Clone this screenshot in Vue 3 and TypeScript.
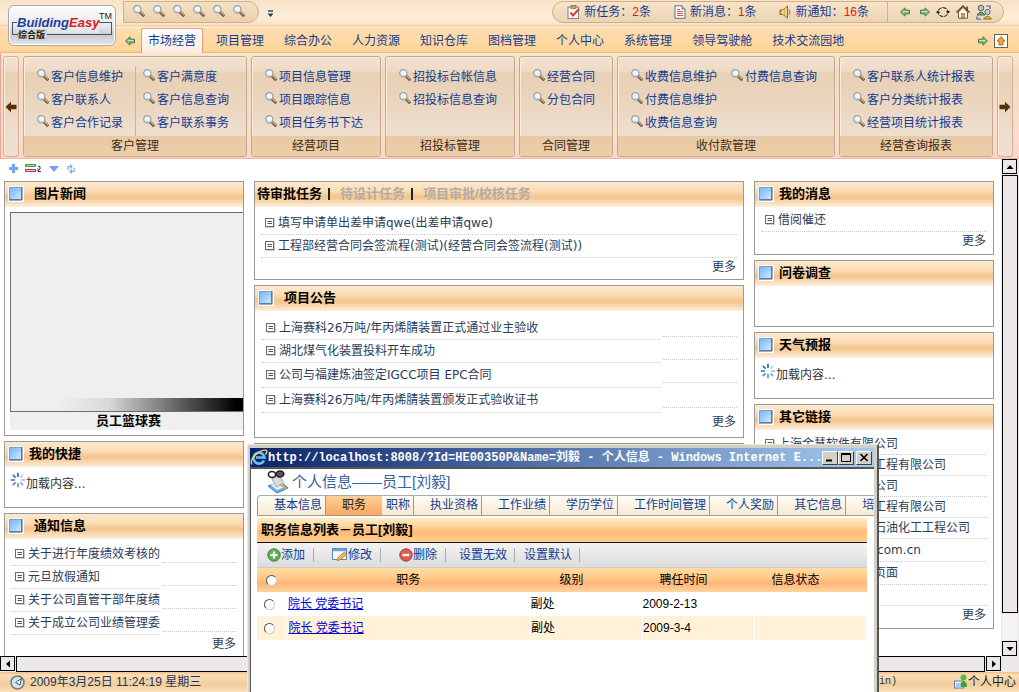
<script setup lang="ts">
import { ref } from 'vue'

interface RibbonGroup { title: string; columns: string[][]; divided?: boolean }
interface Notice { text: string; tall?: boolean }
interface Staff { post: string; level: string; date: string; state: string }

const tabs = ['市场经营', '项目管理', '综合办公', '人力资源', '知识仓库', '图档管理', '个人中心', '系统管理', '领导驾驶舱', '技术交流园地']
const activeTab = ref('市场经营')

const groups: RibbonGroup[] = [
  { title: '客户管理', divided: true, columns: [['客户信息维护', '客户联系人', '客户合作记录'], ['客户满意度', '客户信息查询', '客户联系事务']] },
  { title: '经营项目', columns: [['项目信息管理', '项目跟踪信息', '项目任务书下达']] },
  { title: '招投标管理', columns: [['招投标台帐信息', '招投标信息查询']] },
  { title: '合同管理', columns: [['经营合同', '分包合同']] },
  { title: '收付款管理', columns: [['收费信息维护', '付费信息维护', '收费信息查询'], ['付费信息查询']] },
  { title: '经营查询报表', columns: [['客户联系人统计报表', '客户分类统计报表', '经营项目统计报表']] },
]

const counters = [
  { icon: 'i-task', label: '新任务：', count: 2 },
  { icon: 'i-note', label: '新消息：', count: 1 },
  { icon: 'i-horn', label: '新通知：', count: 16 },
]

const approvals = ['填写申请单出差申请qwe(出差申请qwe)', '工程部经营合同会签流程(测试)(经营合同会签流程(测试))']
const bulletins: Notice[] = [
  { text: '上海赛科26万吨/年丙烯腈装置正式通过业主验收' },
  { text: '湖北煤气化装置投料开车成功' },
  { text: '公司与福建炼油签定IGCC项目 EPC合同', tall: true },
  { text: '上海赛科26万吨/年丙烯腈装置颁发正式验收证书', tall: true },
]
const notices: Notice[] = [
  { text: '关于进行年度绩效考核的' },
  { text: '元旦放假通知' },
  { text: '关于公司直管干部年度绩' },
  { text: '关于成立公司业绩管理委' },
]
const links: Notice[] = [
  { text: '上海金慧软件有限公司' },
  { text: '中国石化集团上海工程有限公司' },
  { text: '中国石油化工集团公司' },
  { text: '中国石化集团宁波工程有限公司' },
  { text: '中国石化集团洛阳石油化工工程公司' },
  { text: 'www.goldensoft.com.cn', tall: true },
  { text: '企业信息门户系统页面', tall: true },
]

const infoTabs = ['基本信息', '职务', '职称', '执业资格', '工作业绩', '学历学位', '工作时间管理', '个人奖励', '其它信息', '培训信息']
const activeInfo = ref('职务')
const picked = ref('')
const staff: Staff[] = [
  { post: '院长 党委书记', level: '副处', date: '2009-2-13', state: '' },
  { post: '院长 党委书记', level: '副处', date: '2009-3-4', state: '' },
]
</script>

<template>
  <div class="page">
    <svg class="defs" width="0" height="0" aria-hidden="true">
      <defs>
        <linearGradient id="g-blue" x1="0" y1="0" x2="1" y2="1">
          <stop offset="0" stop-color="#6fb4f8" /><stop offset="1" stop-color="#d3ebff" />
        </linearGradient>
        <symbol id="i-search" viewBox="0 0 12 12">
          <path d="M7 7 L10.3 10.3" stroke="#5f574f" stroke-width="3" stroke-linecap="round" />
          <path d="M7.8 7 L10.6 9.8" stroke="#dfa85c" stroke-width="1.4" stroke-linecap="round" />
          <circle cx="4.3" cy="4.3" r="3.6" fill="#f2f8fc" stroke="#979ea9" stroke-width="1.2" />
          <path d="M2.2 4.6 A2.2 2.2 0 0 0 5.6 6.2" stroke="#bcd6ea" fill="none" />
        </symbol>
        <symbol id="i-arrow" viewBox="0 0 10 10">
          <path d="M0.5 5 L5 0.8 V3.2 H9.5 V6.8 H5 V9.2 Z" fill="#7cc47a" stroke="#4d7547" />
          <path d="M3 4.5 H8.5" stroke="#c4edbb" />
        </symbol>
        <symbol id="i-brown" viewBox="0 0 12 12">
          <path d="M0.5 6 L6 0.8 V3.7 H11.5 V8.3 H6 V11.2 Z" fill="#5b2f05" />
        </symbol>
        <symbol id="i-task" viewBox="0 0 14 14">
          <rect x="1" y="2" width="10.5" height="11.5" fill="#f4f6fa" stroke="#7682a0" />
          <rect x="4" y="0.5" width="5" height="3" fill="#c9a15e" stroke="#7d6642" stroke-width=".7" />
          <path d="M3.5 7.5 L6 10.5 L12 4" fill="none" stroke="#d8402c" stroke-width="2" />
        </symbol>
        <symbol id="i-note" viewBox="0 0 14 14">
          <path d="M2 .8 H9 L12 4 V13.3 H2 Z" fill="#fff" stroke="#5e6c8a" />
          <path d="M9 .8 V4 H12" fill="#cdd8ec" stroke="#5e6c8a" />
          <path d="M4 4.5 H7 M4 8.5 H10" stroke="#d95a44" /><path d="M4 6.5 H10 M4 10.5 H10" stroke="#d95a44" />
        </symbol>
        <symbol id="i-horn" viewBox="0 0 14 14">
          <path d="M1 5 H4 L8.5 1 V13 L4 9.5 H1 Z" fill="#e7b64e" stroke="#8a6724" />
          <path d="M4 5 V9.5 M7 2.5 V11.5" stroke="#fff2bb" />
          <path d="M10 4.5 Q12 7 10 9.8" fill="none" stroke="#777" />
        </symbol>
        <symbol id="i-refresh" viewBox="0 0 14 14">
          <path d="M2.5 5 A5.2 5.2 0 0 1 11.8 6 M11.5 9.200 A5.200 5.200 0 0 1 2.200 8" fill="none" stroke="#333" stroke-width="1.1" stroke-dasharray="4 1" />
          <path d="M10 6 H14 L12 9 Z M0 8 H4 L2 5 Z" fill="#222" />
        </symbol>
        <symbol id="i-home" viewBox="0 0 14 14">
          <path d="M10 1.500 H12 V6 H10 Z" fill="#a2493a" />
          <path d="M2.5 7 V13.2 H11.5 V7 L7 2.5 Z" fill="#fffbe6" stroke="#6a5a44" />
          <path d="M.5 7.5 L7 1 L13.5 7.5" fill="none" stroke="#4c3d2c" stroke-width="1.3" />
          <rect x="5.5" y="8.5" width="3" height="4.5" fill="#d9a44c" stroke="#6a5a44" stroke-width=".6" />
        </symbol>
        <symbol id="i-users" viewBox="0 0 16 16">
          <circle cx="5" cy="4" r="2.8" fill="#b9c4b8" stroke="#51615a" /><path d="M1 11 Q5 5 9 11 Z" fill="#6ab26c" stroke="#44664a" />
          <circle cx="11.5" cy="8" r="2.6" fill="#d0d3d6" stroke="#5d6470" /><path d="M7.5 15 Q11.5 9.5 15.5 15 Z" fill="#eab93f" stroke="#916d24" />
          <path d="M10 2 H14 V5 M1 12.5 V15 H5" fill="none" stroke="#3c62b0" stroke-width="1.2" />
        </symbol>
        <symbol id="i-up" viewBox="0 0 14 14">
          <rect x=".5" y=".5" width="13" height="13" fill="#fffdf4" stroke="#67605a" />
          <path d="M7 2.5 L11 7 H9 V11 H5 V7 H3 Z" fill="#f2a82c" stroke="#8e5f15" stroke-width=".8" />
        </symbol>
        <symbol id="i-panel" viewBox="0 0 16 16">
          <rect width="16" height="16" fill="#fff" />
          <rect x="1.5" y="1.5" width="12" height="12" fill="url(#g-blue)" stroke="#6fa3d8" />
          <path d="M14 1 V14 H1" fill="none" stroke="#3d587c" /><path d="M2 4.5 H13" stroke="#8cc4fa" />
        </symbol>
        <symbol id="i-doc" viewBox="0 0 10 10">
          <rect x=".5" y=".5" width="8" height="8" fill="#fff" stroke="#6b6b6b" />
          <path d="M2.5 3.5 H7 M2.5 5.5 H7" stroke="#555" /><path d="M1 9.5 H9.5 V1" fill="none" stroke="#ccc" />
        </symbol>
        <symbol id="i-load" viewBox="0 0 16 16">
          <g stroke-width="1.7">
            <path d="M8 .8 V5" stroke="#3566a8" /><path d="M13.2 2.8 L10.3 5.7" stroke="#bcd0ea" />
            <path d="M15.2 8 H11" stroke="#a9c2e3" /><path d="M13.2 13.2 L10.3 10.3" stroke="#86a8d5" />
            <path d="M8 15.2 V11" stroke="#6e97cc" /><path d="M2.8 13.2 L5.7 10.3" stroke="#5c8ac5" />
            <path d="M.8 8 H5" stroke="#4c7dbd" /><path d="M2.8 2.8 L5.7 5.7" stroke="#3f71b3" />
          </g>
        </symbol>
        <symbol id="i-tri" viewBox="0 0 8 8"><path d="M4 2 L7.5 6 H.5 Z" fill="#000" /></symbol>
      </defs>
    </svg>

    <header class="top">
      <a class="logo" href="#" aria-label="BuildingEasy 综合版">
        <span class="brand"><span class="blue">Building</span><span class="red">Easy</span></span>
        <sup>TM</sup>
        <span class="edition">综合版</span>
      </a>
      <div class="strip">
        <div class="quick">
          <a v-for="n in 6" :key="n" href="#" aria-label="快捷"><svg class="s12"><use href="#i-search" /></svg></a>
        </div>
        <button class="plain more-tools" aria-label="展开">
          <svg width="7" height="8" viewBox="0 0 7 8"><path d="M1 1 H6" stroke="#1b3a6b" stroke-width="1.4" /><path d="M.5 3.5 H6.5 L3.5 7 Z" fill="#1b3a6b" /></svg>
        </button>
        <div class="status">
          <div class="counters">
            <a v-for="c in counters" :key="c.icon" href="#" class="counter">
              <svg class="s14"><use :href="'#' + c.icon" /></svg><span>{{ c.label }}<em>{{ c.count }}</em>条</span>
            </a>
          </div>
          <div class="tools">
            <button class="plain" aria-label="后退"><svg class="s10"><use href="#i-arrow" /></svg></button>
            <button class="plain" aria-label="前进"><svg class="s10 flip"><use href="#i-arrow" /></svg></button>
            <button class="plain" aria-label="刷新"><svg class="s14"><use href="#i-refresh" /></svg></button>
            <button class="plain" aria-label="主页"><svg class="s14"><use href="#i-home" /></svg></button>
            <button class="plain" aria-label="用户"><svg class="s16"><use href="#i-users" /></svg></button>
          </div>
        </div>
      </div>
      <nav class="tabs">
        <button class="plain" aria-label="向左"><svg class="s10"><use href="#i-arrow" /></svg></button>
        <a v-for="t in tabs" :key="t" href="#" class="tab" :class="{ on: t === activeTab }" @click.prevent="activeTab = t">{{ t }}</a>
        <button class="plain push" aria-label="向右"><svg class="s10 flip"><use href="#i-arrow" /></svg></button>
        <button class="plain" aria-label="收起"><svg class="s14"><use href="#i-up" /></svg></button>
      </nav>
    </header>

    <section class="ribbon">
      <button class="group side" aria-label="上一组"><svg class="s12"><use href="#i-brown" /></svg></button>
      <div v-for="g in groups" :key="g.title" class="group">
        <div class="cols" :class="{ divided: g.divided }">
          <ul v-for="(c, i) in g.columns" :key="i">
            <li v-for="item in c" :key="item"><a href="#"><svg class="s12"><use href="#i-search" /></svg>{{ item }}</a></li>
          </ul>
        </div>
        <div class="caption">{{ g.title }}</div>
      </div>
      <button class="group side" aria-label="下一组"><svg class="s12 flip"><use href="#i-brown" /></svg></button>
    </section>

    <div class="work">
      <main class="desk">
        <div class="mini">
          <button class="plain" aria-label="添加"><svg width="9" height="9" viewBox="0 0 9 9"><path d="M4.5 0 V9 M0 4.5 H9" stroke="#7b9ff0" stroke-width="3" /></svg></button>
          <button class="plain" aria-label="布局"><svg width="17" height="9" viewBox="0 0 17 9"><rect x=".5" y=".5" width="10" height="2" fill="#9fdc8a" stroke="#4b9a3f" /><rect x=".5" y="5.5" width="10" height="2" fill="#f2b7cd" stroke="#a8456c" /><path d="M13 2 Q16 2 15 5 L13 7 M13 4.5 V7.5 H16" fill="none" stroke="#335" /></svg></button>
          <button class="plain" aria-label="展开"><svg width="10" height="6" viewBox="0 0 10 6"><path d="M0 0 H10 L5 6 Z" fill="#7b9ff0" /></svg></button>
          <button class="plain" aria-label="刷新"><svg width="10" height="10" viewBox="0 0 10 10"><path d="M2 6 V2.500 H5.500 M4 .5 L6 2.500 L4 4.500 M8 4 V7.500 H4.500 M6 5.500 L4 7.500 L6 9.500" fill="none" stroke="#86a9ea" stroke-width="1.200" /></svg></button>
        </div>
        <div class="board">
          <div class="column">
            <section class="panel news">
              <h2 class="wide"><svg class="s16"><use href="#i-panel" /></svg>图片新闻</h2>
              <div class="photo"><div class="shade"></div></div>
              <p class="legend">员工篮球赛</p>
            </section>
            <section class="panel">
              <h2><svg class="s16"><use href="#i-panel" /></svg>我的快捷</h2>
              <p class="loading"><svg class="s16"><use href="#i-load" /></svg>加载内容...</p>
            </section>
            <section class="panel notices">
              <h2 class="wide"><svg class="s16"><use href="#i-panel" /></svg>通知信息</h2>
              <ul class="list dated">
                <li v-for="n in notices" :key="n.text"><a href="#"><svg class="s10"><use href="#i-doc" /></svg>{{ n.text }}</a><span class="day"></span></li>
              </ul>
              <a class="more" href="#">更多</a>
            </section>
          </div>

          <div class="column">
            <section class="panel tasks">
              <h2 class="switch"><a href="#" class="cur">待审批任务</a><i></i><a href="#">待设计任务</a><i></i><a href="#">项目审批/校核任务</a></h2>
              <ul class="list">
                <li v-for="a in approvals" :key="a"><a href="#"><svg class="s10"><use href="#i-doc" /></svg>{{ a }}</a></li>
              </ul>
              <a class="more" href="#">更多</a>
            </section>
            <section class="panel bulletin">
              <h2 class="wide"><svg class="s16"><use href="#i-panel" /></svg>项目公告</h2>
              <ul class="list dated">
                <li v-for="n in bulletins" :key="n.text" :class="{ tall: n.tall }"><a href="#"><svg class="s10"><use href="#i-doc" /></svg>{{ n.text }}</a><span class="day"></span></li>
              </ul>
              <a class="more" href="#">更多</a>
            </section>
            <section class="panel"></section>
          </div>

          <div class="column">
            <section class="panel mail">
              <h2><svg class="s16"><use href="#i-panel" /></svg>我的消息</h2>
              <ul class="list">
                <li><a href="#"><svg class="s10"><use href="#i-doc" /></svg>借阅催还</a></li>
              </ul>
              <a class="more" href="#">更多</a>
            </section>
            <section class="panel"><h2><svg class="s16"><use href="#i-panel" /></svg>问卷调查</h2></section>
            <section class="panel">
              <h2><svg class="s16"><use href="#i-panel" /></svg>天气预报</h2>
              <p class="loading"><svg class="s16"><use href="#i-load" /></svg>加载内容...</p>
            </section>
            <section class="panel partners">
              <h2><svg class="s16"><use href="#i-panel" /></svg>其它链接</h2>
              <ul class="list">
                <li v-for="l in links" :key="l.text" :class="{ tall: l.tall }"><a href="#"><svg class="s10"><use href="#i-doc" /></svg>{{ l.text }}</a></li>
                <li></li>
              </ul>
              <a class="more" href="#">更多</a>
            </section>
          </div>
        </div>
      </main>
      <div class="vbar">
        <button class="sb" aria-label="上"><svg class="s8"><use href="#i-tri" /></svg></button>
        <div class="thumb"></div>
        <div class="track"></div>
        <button class="sb" aria-label="下"><svg class="s8 down"><use href="#i-tri" /></svg></button>
      </div>
      <div class="hbar">
        <button class="sb" aria-label="左"><svg class="s8 left"><use href="#i-tri" /></svg></button>
        <div class="thumb"></div>
        <button class="sb" aria-label="右"><svg class="s8 right"><use href="#i-tri" /></svg></button>
      </div>
    </div>

    <footer class="foot">
      <svg width="15" height="15" viewBox="0 0 15 15"><circle cx="7.5" cy="7.5" r="6.5" fill="#d3e4ec" stroke="#6f7f88" stroke-width="1.6" /><path d="M11.500 3.500 L5.500 7.500 L10 10 Z" fill="#fff" stroke="#33566a" /></svg>
      <span>2009年3月25日 11:24:19 星期三</span>
      <span class="user">刘毅(admin)</span>
      <a href="#"><svg width="14" height="16" viewBox="0 0 14 16"><rect x=".5" y="7" width="9" height="7" fill="#e8f1fb" stroke="#5b7fb4" /><path d="M2 10 H8 M2 12 H6" stroke="#7ea0cf" /><circle cx="9.5" cy="3.5" r="3" fill="#54bd4a" /><path d="M6.5 13 Q6.500 7 9.500 7 Q13 7 13 13 Z" fill="#3ba336" /></svg>个人中心</a>
    </footer>

    <div class="window" role="dialog" aria-label="个人信息">
      <div class="titlebar">
        <svg width="18" height="17" viewBox="0 0 18 17"><path d="M14 11.500 A5.500 5.500 0 1 1 14.500 8.500 H6" fill="none" stroke="#6cc0f5" stroke-width="2.600" /><path d="M2 15.500 Q-.5 11 6 5.500 Q13 0 16.500 1.500 Q17.500 3 15.500 5.500" fill="none" stroke="#f0cf57" stroke-width="1.400" /></svg>
        <span class="caption-text">http://localhost:8008/?Id=HE00350P&amp;Name=刘毅 - 个人信息 - Windows Internet E...</span>
        <button class="win" aria-label="最小化"><svg width="10" height="9"><path d="M1 7.500 H7" stroke="#000" stroke-width="2" /></svg></button>
        <button class="win" aria-label="最大化"><svg width="10" height="9"><path d="M.5 .5 H9.500 V8.500 H.5 Z M.5 1.500 H9.500" fill="none" stroke="#000" /></svg></button>
        <button class="win close" aria-label="关闭"><svg width="10" height="9"><path d="M1.500 1 L8.500 8 M8.500 1 L1.500 8" stroke="#000" stroke-width="1.600" /></svg></button>
      </div>
      <div class="sheet">
        <h1>
          <svg width="22" height="24" viewBox="0 0 22 24"><path d="M1 16 L14 12 L21 18 L10 23 Z" fill="#6db2ee" stroke="#3e7bc0" /><path d="M4 15 L12 12 L18 17 L10 20 Z" fill="#e6f4ff" /><path d="M5 9 Q10 5 15 9 L17 14 L9 17 Z" fill="#d7dbe0" stroke="#8b929c" stroke-width=".7" /><ellipse cx="5" cy="4.500" rx="3.600" ry="3" fill="#fff" stroke="#222" stroke-width="1.600" /><ellipse cx="13" cy="4" rx="3.800" ry="3" fill="#555" stroke="#222" stroke-width="1.600" /><path d="M13 14 L19 19" stroke="#e8a53a" stroke-width="2" /></svg>
          个人信息——员工[刘毅]
        </h1>
        <nav class="info-tabs">
          <a v-for="t in infoTabs" :key="t" href="#" :class="{ on: t === activeInfo, tight: t === '职称' }" @click.prevent="activeInfo = t">{{ t }}</a>
        </nav>
        <div class="grid-box">
          <h3>职务信息列表－员工[刘毅]</h3>
          <div class="actions">
            <button class="first"><svg width="14" height="14" viewBox="0 0 14 14"><circle cx="7" cy="7" r="6.200" fill="#63ae57" stroke="#3c7e38" /><path d="M7 3.500 V10.500 M3.500 7 H10.500" stroke="#fff" stroke-width="2.200" /></svg>添加</button>
            <button><svg width="16" height="14" viewBox="0 0 16 14"><rect x=".5" y=".5" width="14" height="11" fill="#fafdff" stroke="#5b87c2" /><path d="M1 2 H14" stroke="#6ba0e0" stroke-width="2.500" /><path d="M5 12.500 L6 9.500 L12.500 4 L14.500 6.500 L8 12 Z" fill="#f6bc4e" stroke="#a87320" stroke-width=".8" /></svg>修改</button>
            <button><svg width="14" height="14" viewBox="0 0 14 14"><circle cx="7" cy="7" r="6.200" fill="#e05a50" stroke="#b5362f" /><path d="M3.500 7 H10.500" stroke="#fff" stroke-width="2.400" /></svg>删除</button>
            <button class="text">设置无效</button>
            <button class="text near">设置默认</button>
          </div>
          <table>
            <colgroup><col class="c-pick" /><col /><col class="c-small" /><col class="c-small" /><col class="c-small" /></colgroup>
            <thead>
              <tr>
                <th><input v-model="picked" type="radio" name="pick" value="all" aria-label="全选" /></th>
                <th>职务</th><th class="shift">级别</th><th class="shift">聘任时间</th><th class="shift">信息状态</th>
              </tr>
            </thead>
            <tbody>
              <tr v-for="(s, i) in staff" :key="s.date">
                <td class="mid"><input v-model="picked" type="radio" name="pick" :value="String(i)" :aria-label="s.post" /></td>
                <td class="post"><a href="#">{{ s.post }}</a></td><td>{{ s.level }}</td><td>{{ s.date }}</td><td>{{ s.state }}</td>
              </tr>
            </tbody>
          </table>
        </div>
      </div>
    </div>
  </div>
</template>

<style>
html, body { margin: 0; overflow: hidden; }
</style>

<style scoped>
.page {
  --sans: "Liberation Sans", "Noto Sans CJK SC", sans-serif;
  position: relative;
  display: flex;
  flex-direction: column;
  height: 100vh;
  overflow: hidden;
  background: #fff;
  font: 12px/16px var(--sans);
  color: #2c3c58;
}
.page *, .page *::before { box-sizing: border-box; }
.defs { position: absolute; }
svg { display: block; flex: none; }
a { color: inherit; text-decoration: none; }
ul { list-style: none; margin: 0; padding: 0; }
h1, h2, h3, p { margin: 0; }
button { font: inherit; color: inherit; padding: 0; }
.plain { border: 0; background: none; display: flex; align-items: center; }
.s8 { width: 8px; height: 8px; }
.s10 { width: 10px; height: 10px; }
.s12 { width: 12px; height: 12px; }
.s14 { width: 14px; height: 14px; }
.s16 { width: 16px; height: 16px; }
.flip { transform: scaleX(-1); }
.down { transform: rotate(180deg); }
.left { transform: rotate(-90deg); }
.right { transform: rotate(90deg); }

.top {
  display: grid;
  grid-template: 27px 26px / 123px minmax(0, 1fr);
  flex: none;
  background: linear-gradient(#f8e3c8, #fcedd8 18px, #f9e2c2 25px, #e8c89c 26px, #fff0d8 27px, #ffdcae 29px, #ffd69a 50px, #f8cb8c 52px, #d9ae82 53px);
  color: #123c94;
}
.logo {
  grid-row: 1 / 3;
  margin: 5px 7px 7px 8px;
  border: 1px solid #a9a9ad;
  border-radius: 6px;
  background: linear-gradient(#fdfdfd, #e9eaec 50%, #c9cbd0 75%, #e6e7e9);
  box-shadow: inset 0 0 0 1px #fff;
  position: relative;
}
.logo::before {
  content: "";
  position: absolute;
  inset: 16px 3px 10px 3px;
  border: 1px solid #4c5470;
}
.brand, .edition, .logo sup { position: absolute; white-space: nowrap; color: #222; }
.brand { left: 8px; top: 7px; font: italic bold 13px/20px var(--sans); background: linear-gradient(#f5f5f6, #e4e5e8); }
.logo sup { right: 3px; top: 5px; font: 9px/10px var(--sans); }
.blue { color: #1c3f9c; }
.red { color: #e01a22; }
.edition { left: 9px; top: 23px; padding-right: 2px; font: bold 9px/12px var(--sans); background: #d2d4d8; }
.strip { display: flex; align-items: flex-start; padding: 1px 15px 0 0; }
.quick {
  display: flex;
  gap: 8px;
  height: 22px;
  width: 136px;
  padding: 3px 0 0 9px;
  border: 1px solid #cfb08b;
  border-radius: 0 11px 11px 0;
  background: linear-gradient(#f6e0c4, #ead0ae);
}
.more-tools { margin: 9px 0 0 8px; }
.status {
  display: flex;
  align-items: center;
  margin-left: auto;
  height: 22px;
  padding: 0 11px 0 14px;
  border: 1px solid #cfb08b;
  border-radius: 11px;
  background: linear-gradient(#f8e4c9, #ecd3b2);
}
.counters { display: flex; gap: 22px; margin-right: 18px; }
.counter { display: flex; align-items: center; gap: 3px; white-space: nowrap; }
.counter em { font-style: normal; color: #e8180c; }
.tools { display: flex; align-items: center; gap: 6px; height: 20px; padding-left: 12px; border-left: 1px solid #cfb08b; }
.tools .plain:nth-child(2) { margin-left: 4px; }
.tabs { display: flex; align-items: center; gap: 6px; padding: 1px 11px 0 2px; }
.tab { height: 25px; padding: 0 6px; border: 1px solid transparent; border-bottom: 0; line-height: 24px; white-space: nowrap; }
.tab.on { border-color: #e89a86; border-radius: 2px 2px 0 0; background: linear-gradient(#fff, #fbece0); }
.push { margin-left: auto; }

.ribbon {
  flex: none;
  display: grid;
  grid-template-columns: 16px minmax(0, 224fr) minmax(0, 130fr) minmax(0, 130fr) minmax(0, 94fr) minmax(0, 218fr) minmax(0, 154fr) 16px;
  gap: 4px;
  padding: 3px 6px 1px 2px;
  border-bottom: 1px solid #f4b3a0;
  border-left: 1px solid #e9a693;
  background: linear-gradient(#fbe6ce, #f3dabd 20px, #f8dfcd 80px, #fbd6c6);
}
.group {
  display: flex;
  flex-direction: column;
  min-height: 101px;
  border: 1px solid #c4a990;
  border-radius: 3px;
  background: linear-gradient(#f3e2d0, #eedbc6 14px, #e8d0b3 16px, #ead4bc 40px, #efdfd0 80px);
  box-shadow: inset 1px 1px 0 #f9ecdc;
}
.side { align-items: center; justify-content: center; border-color: #d8ae96; }
.cols { flex: 1; display: flex; gap: 14px; padding: 9px 0 0 13px; color: #123c94; }
.cols.divided { gap: 0; }
.cols.divided ul + ul { padding-left: 7px; border-left: 1px solid #d2b08a; }
.cols.divided ul:first-child { padding-right: 12px; }
.cols li { height: 23px; }
.cols a { display: flex; gap: 2px; white-space: nowrap; line-height: 23px; }
.cols svg { margin-top: 3px; }
.caption { height: 20px; line-height: 20px; text-align: center; color: #3a2b20; background: linear-gradient(#e9c9a3, #edcea9); }

.work { flex: 1; min-height: 0; display: grid; grid-template: minmax(0, 1fr) 16px / minmax(0, 1fr) 18px; background: #ece8ea; }
.desk { overflow: hidden; background: #fff; padding: 0 7px 0 4px; }
.mini { display: flex; align-items: center; gap: 7px; height: 22px; padding: 0 0 3px 5px; }
.board { display: grid; grid-template-columns: 240px minmax(0, 1fr) 240px; gap: 10px; }
.column { display: flex; flex-direction: column; gap: 5px; min-width: 0; }
.panel { min-height: 67px; border: 1px solid #999; background: #fff; }
.panel h2 {
  display: flex;
  align-items: center;
  gap: 5px;
  height: 25px;
  padding: 0 0 2px 3px;
  font-size: 13px;
  line-height: 23px;
  color: #000;
  background: linear-gradient(#fde9cd, #fbdcb4 9px, #f3c48e 15px, #f7cf9f 18px, #fdf0df 25px);
}
.panel h2.wide { gap: 10px; }
.panel .switch { gap: 0; padding-left: 2px; color: #b3aca6; white-space: nowrap; }
.switch .cur { color: #000; }
.switch i { width: 2px; height: 12px; margin: 0 10px 0 6px; background: #222; }
.news { min-height: 255px; }
.tasks { min-height: 99px; }
.bulletin { min-height: 153px; }
.notices { min-height: 153px; }
.mail { min-height: 74px; }
.partners { min-height: 225px; }
.photo { display: flex; align-items: flex-end; height: 200px; margin: 5px 0 0 5px; border: 1px solid #6d6d6d; border-right: 0; background: #efefef; }
.shade { flex: 1; height: 13px; background: linear-gradient(90deg, #efefef 20%, #d9d9d9 42%, #000 97%); }
.legend { margin-left: 5px; padding-left: 4px; height: 18px; text-align: center; font: bold 13px/18px var(--sans); color: #000; background: #efefef; }
.loading { display: flex; align-items: flex-start; padding: 5px 0 0 5px; color: #333; line-height: 24px; font-family: "DejaVu Sans", "Noto Sans CJK SC", sans-serif; }
.list { padding: 4px 6px 0; font-family: "DejaVu Sans", "Noto Sans CJK SC", sans-serif; }
.list li { display: flex; align-items: flex-start; height: 23px; border-bottom: 1px dotted #c9c9c9; line-height: 22px; white-space: nowrap; }
.list li.tall { height: 25px; line-height: 26px; }
.list a { display: flex; align-items: center; gap: 3px; flex: 1; min-width: 0; padding-left: 4px; }
.list.dated li { gap: 3px; border: 0; }
.list.dated a { border-bottom: 1px dotted #c9c9c9; height: 100%; }
.list.dated .day { width: 74px; height: 20px; border-bottom: 1px dotted #c9c9c9; }
.mail .list { padding-top: 2px; }
.tasks .list { padding-top: 5px; }
.bulletin .list { padding-left: 7px; padding-top: 6px; }
.partners .list li { height: 21px; line-height: 20px; }
.partners .list li.tall { height: 23px; line-height: 22px; }
.more { display: block; width: max-content; margin: 0 7px 0 auto; line-height: 18px; }

.vbar { display: flex; flex-direction: column; gap: 1px; padding: 0 1px; }
.sb { display: flex; align-items: center; justify-content: center; flex: none; width: 15px; height: 15px; border: 1px solid #000; background: #ece8ea; }
.vbar .thumb { flex: 439; border: 1px solid #000; background: #ece8ea; }
.track { flex: 26; background: #f5f3f4; }
.hbar { display: flex; gap: 1px; }
.hbar .thumb { flex: 1; border: 1px solid #000; background: #ece8ea; }

.foot {
  flex: none;
  display: flex;
  align-items: center;
  gap: 5px;
  height: 20px;
  padding: 0 3px 0 10px;
  background: linear-gradient(#f2bd86, #fbdfb8 3px, #f3cd9a 12px, #fbe0bb);
  color: #1d3560;
  white-space: nowrap;
}
.foot .user { margin: 0 52px 0 auto; font: 10px/16px "Liberation Mono", "Noto Sans CJK SC", monospace; }
.foot a { display: flex; align-items: center; color: #222; }

.window {
  position: absolute;
  left: 247px;
  top: 444px;
  bottom: 0;
  width: 632px;
  display: flex;
  flex-direction: column;
  padding: 3px 3px 0 2px;
  border: 1px solid #eae7e0;
  border-right: 2px solid #555;
  border-bottom: 0;
  background: #d4d0c8;
}
.titlebar { display: flex; align-items: center; height: 19px; padding: 0 2px 0 0; background: linear-gradient(90deg, #0a246a, #a6caf0); }
.caption-text { flex: 1; min-width: 0; white-space: nowrap; color: #fff; font: bold 12px/18px "Liberation Mono", "Noto Sans CJK SC", monospace; }
.win { display: flex; align-items: center; justify-content: center; width: 16px; height: 14px; border: 1px solid; border-color: #fff #404040 #404040 #fff; background: #d4d0c8; }
.close { margin-left: 2px; }
.sheet { flex: 1; min-height: 0; overflow: hidden; border-top: 2px solid #555; border-left: 1px solid #555; background: #fff; }
.sheet h1 { display: flex; align-items: center; gap: 3px; height: 26px; padding-left: 16px; font: 15px/24px var(--sans); color: #3c629c; }
.info-tabs { display: flex; height: 21px; margin-left: 6px; border-top: 1px solid #aaa; border-bottom: 1px solid #a59b86; border-left: 1px solid #999; border-radius: 4px 0 0 0; overflow: hidden; background: linear-gradient(#fffdf6, #f6ead2); }
.info-tabs a { flex: none; padding: 0 3px 0 16px; border-right: 1px solid #999; line-height: 19px; color: #123c94; }
.info-tabs .on { padding: 0 16px; border: 0; color: #222; background: linear-gradient(#ffcf98, #f9a95e); }
.info-tabs .tight { padding: 0 3px 0 4px; }
.grid-box { margin: 2px 7px 0 6px; color: #000; }
.grid-box h3 { height: 25px; padding-left: 4px; border-bottom: 1px solid #111; font-size: 13px; line-height: 24px; background: linear-gradient(#ffeccb, #ffd69a 8px, #ffbb78 14px, #ffd28f); }
.actions { display: flex; align-items: center; height: 25px; padding-bottom: 1px; background: linear-gradient(#f3f3f3, #dcdcdc); border-bottom: 1px solid #ccc; color: #123c94; }
.actions button { display: flex; align-items: center; height: 14px; padding: 0 8px 0 18px; border: 0; border-right: 1px solid #aaa; background: none; white-space: nowrap; }
.actions .first { padding-left: 10px; }
.actions .text { padding: 0 7px 0 13px; }
.actions .near { padding-left: 9px; }
table { width: 100%; border-collapse: collapse; table-layout: fixed; }
.c-pick { width: 29px; }
.c-small { width: 112px; }
th, td { height: 24px; padding: 0; line-height: 16px; font-weight: normal; text-align: left; }
th { text-align: center; background: linear-gradient(#ffdda4, #ffc988 10px, #ffb478 15px, #ffd59c); }
th.shift { padding-right: 30px; }
tbody tr:nth-child(even) td { background: #fff2d8; border-right: 1px solid #fff; }
.post { padding-left: 2px; }
.mid { text-align: center; padding-right: 4px; }
td a { color: #0000d8; text-decoration: underline; }
input[type="radio"] { appearance: none; display: inline-block; width: 11px; height: 11px; margin: 0; vertical-align: middle; border: 1px solid; border-color: #555 #ccc #ccc #555; border-radius: 50%; background: #fff; }
input[type="radio"]:checked { background: radial-gradient(#000 2px, #fff 3px); }
</style>
